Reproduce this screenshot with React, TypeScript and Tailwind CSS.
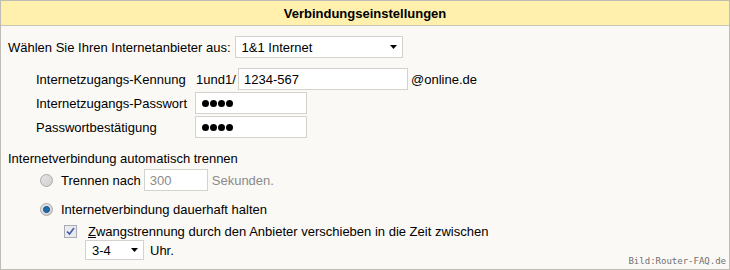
import type { ReactNode } from 'react'

function Arrow() {
  return (
    <svg width="7" height="4" viewBox="0 0 7 4" className="shrink-0">
      <path d="M0 0H7L3.5 4Z" fill="#000" />
    </svg>
  )
}

function Select({ value, width, height }: { value: string; width: string; height: string }) {
  return (
    <div
      className={`flex items-center justify-between bg-white border border-[#d4d2cc] pl-[6px] pr-[5px] ${width} ${height}`}
    >
      <span>{value}</span>
      <Arrow />
    </div>
  )
}

function TextBox({ value, className, muted }: { value: ReactNode; className: string; muted?: boolean }) {
  return (
    <div
      className={`flex items-center bg-white border border-[#d4d2cc] pl-[5px] h-[22px] ${className} ${
        muted ? 'text-[#8a8a8a]' : ''
      }`}
    >
      {value}
    </div>
  )
}

function Dots() {
  return (
    <span className="flex gap-[1px] pl-[1px]">
      {[0, 1, 2, 3].map((i) => (
        <span key={i} className="w-[7px] h-[7px] rounded-full bg-black" />
      ))}
    </span>
  )
}

function Radio({ checked }: { checked?: boolean }) {
  return (
    <span className="w-[13px] h-[13px] rounded-full border border-[#a9a9a9] bg-gradient-to-br from-[#e6e6e6] to-[#cfcfcf] flex items-center justify-center shrink-0">
      {checked && <span className="w-[7px] h-[7px] rounded-full bg-[#1f6fb0] border border-[#174f80]" />}
    </span>
  )
}

function App() {
  return (
    <main
      className="relative w-[730px] h-[270px] border border-[#bebcb4] bg-[#faf9f6] text-[13px] text-black leading-none"
      style={{ fontFamily: '"Liberation Sans", Arial, sans-serif' }}
    >
      <div className="h-[25px] bg-[#fff0ae] border-b border-[#c8c5b8] flex items-center justify-center font-bold text-[13px]">
        Verbindungseinstellungen
      </div>

      <div className="flex items-center h-[22px] mt-[10px] pl-[7px]">
        <span>Wählen Sie Ihren Internetanbieter aus:</span>
        <div className="ml-[4px]">
          <Select value="1&1 Internet" width="w-[168px]" height="h-[22px]" />
        </div>
      </div>

      <div className="flex flex-col gap-[2px] mt-[10px] pl-[35px]">
        <div className="flex items-center h-[22px]">
          <span className="w-[160px]">Internetzugangs-Kennung</span>
          <span className="w-[42px]">1und1/</span>
          <TextBox value="1234-567" className="w-[170px]" />
          <span className="ml-[3px]">@online.de</span>
        </div>
        <div className="flex items-center h-[22px]">
          <span className="w-[159px]">Internetzugangs-Passwort</span>
          <TextBox value={<Dots />} className="w-[112px]" />
        </div>
        <div className="flex items-center h-[22px]">
          <span className="w-[159px]">Passwortbestätigung</span>
          <TextBox value={<Dots />} className="w-[112px]" />
        </div>
      </div>

      <div className="flex items-center h-[20px] mt-[10px] pl-[7px]">Internetverbindung automatisch trennen</div>

      <div className="flex items-center h-[22px] mt-[1px] pl-[39px]">
        <Radio />
        <span className="ml-[8px]">Trennen nach</span>
        <TextBox value="300" className="w-[64px] ml-[3px]" muted />
        <span className="ml-[4px] text-[#8a8a8a]">Sekunden.</span>
      </div>

      <div className="flex items-center h-[22px] mt-[7px] pl-[39px]">
        <Radio checked />
        <span className="ml-[8px]">Internetverbindung dauerhaft halten</span>
      </div>

      <div className="flex items-center h-[16px] mt-[3px] pl-[63px]">
        <span className="w-[13px] h-[13px] border border-[#a7abb4] bg-[#ebebef] flex items-center justify-center shrink-0">
          <svg width="9" height="9" viewBox="0 0 9 9">
            <path d="M1 4.5L3.5 7L8 1" stroke="#3d5db0" strokeWidth="1.6" fill="none" />
          </svg>
        </span>
        <span className="ml-[11px]">
          <span className="underline">Z</span>wangstrennung durch den Anbieter verschieben in die Zeit zwischen
        </span>
      </div>

      <div className="flex items-center h-[20px] mt-[1px] pl-[84px]">
        <Select value="3-4" width="w-[59px]" height="h-[20px]" />
        <span className="ml-[6px]">Uhr.</span>
      </div>

      <span
        className="absolute right-[3px] bottom-[3px] text-[9px] text-[#6f6f6f]"
        style={{ fontFamily: '"DejaVu Sans Mono", monospace' }}
      >
        Bild:Router-FAQ.de
      </span>
    </main>
  )
}

export default App
